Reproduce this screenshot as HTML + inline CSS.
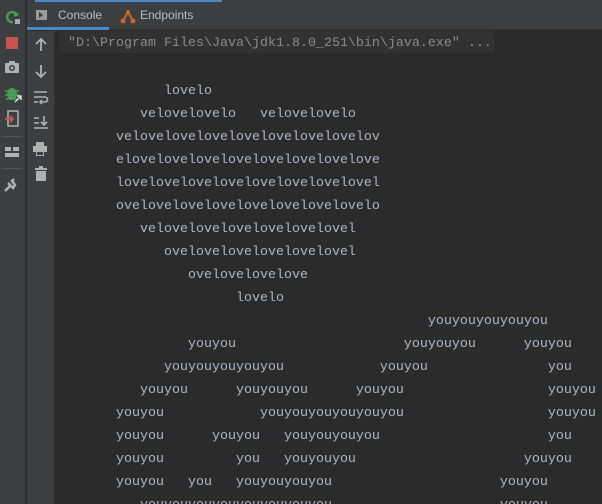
<!DOCTYPE html>
<html><head><meta charset="utf-8"><style>
*{margin:0;padding:0;box-sizing:border-box}
html,body{width:602px;height:504px;overflow:hidden}
body{background:#2b2b2b;position:relative;font-family:"Liberation Sans",sans-serif}
.lt{position:absolute;left:0;top:0;width:26px;height:504px;background:#3c3f41;border-right:1px solid #323232}
.tb{position:absolute;left:27px;top:0;width:575px;height:30px;background:#3c3f41;border-bottom:1px solid #323232}
.topblue{position:absolute;left:35px;top:0;width:187px;height:2px;background:#4a88c7}
.t2{position:absolute;left:27px;top:31px;width:28px;height:473px;background:#3c3f41;border-right:1px solid #323232}
.tab{position:absolute;top:8px;font-size:12px;color:#bbbbbb}
.ul{position:absolute;left:27px;top:27px;width:82px;height:3px;background:#4a88c7}
pre{position:absolute;left:68px;top:80px;font-family:"Liberation Mono",monospace;font-size:13.33px;line-height:23px;color:#a9b7c6}
.q{position:absolute;left:59px;top:31px;width:435px;height:22px;background:#323232;font-family:"Liberation Mono",monospace;font-size:13.33px;color:#8a8a8a;padding:5px 0 0 9px;line-height:16px}
.ic{position:absolute}
</style></head><body>
<div class="lt"></div>
<div class="tb"></div>
<div class="topblue"></div>
<div class="ul"></div>
<div class="t2"></div>
<div class="ic" style="left:36px;top:10px;width:11px;height:10px;background:#9a9a9a"></div>
<div class="ic" style="left:39px;top:12px;width:0;height:0;border-left:4px solid #3c3f41;border-top:3px solid transparent;border-bottom:3px solid transparent"></div>
<div class="tab" style="left:58px">Console</div>
<svg class="ic" style="left:120px;top:8px" width="16" height="16"><path d="M3 13 L8 4 L13 13" stroke="#c9652d" stroke-width="2" fill="none"/><circle cx="3" cy="13" r="2.5" fill="#c9652d"/><circle cx="13" cy="13" r="2.5" fill="#c9652d"/><circle cx="8" cy="4" r="2" fill="#c9652d"/></svg>
<div class="tab" style="left:140px">Endpoints</div>
<svg class="ic" style="left:4px;top:8px" width="18" height="18"><path d="M13 8 A5 5 0 1 0 9 14" stroke="#499c54" stroke-width="2.5" fill="none"/><path d="M10 3 L15 6 L10 9Z" fill="#499c54"/><rect x="11" y="11" width="5" height="5" fill="#aaa"/></svg>
<div class="ic" style="left:6px;top:37px;width:12px;height:12px;background:#c75450"></div>
<svg class="ic" style="left:4px;top:60px" width="16" height="14"><rect x="1" y="3" width="14" height="10" fill="#afb1b3"/><rect x="5" y="1" width="6" height="3" fill="#afb1b3"/><circle cx="8" cy="8" r="3" fill="#3c3f41"/><circle cx="8" cy="8" r="1.5" fill="#afb1b3"/></svg>
<svg class="ic" style="left:4px;top:85px" width="18" height="18"><ellipse cx="8" cy="9" rx="5" ry="6" fill="#499c54"/><path d="M1 6h14M1 10h14M2 14h12" stroke="#499c54" stroke-width="1.5"/><path d="M11 17 L17 11 M13 11h4v4" stroke="#ddd" stroke-width="1.5" fill="none"/></svg>
<svg class="ic" style="left:4px;top:110px" width="16" height="18"><rect x="4" y="1" width="10" height="15" stroke="#afb1b3" stroke-width="1.5" fill="none"/><path d="M1 9h8 M6 6l3 3-3 3" stroke="#c75450" stroke-width="2" fill="none"/></svg>
<div class="ic" style="left:2px;top:136px;width:20px;height:1px;background:#555"></div>
<svg class="ic" style="left:4px;top:145px" width="16" height="14"><rect x="1" y="2" width="6" height="4" fill="#afb1b3"/><rect x="9" y="2" width="6" height="4" fill="#afb1b3"/><rect x="1" y="8" width="14" height="4" fill="#afb1b3"/></svg>
<div class="ic" style="left:2px;top:168px;width:20px;height:1px;background:#555"></div>
<svg class="ic" style="left:3px;top:177px" width="16" height="16"><path d="M2 14 L7 9 M5 6 L10 11 L12 8 L9 4 L11 2 M9 4 L12 8" stroke="#afb1b3" stroke-width="2.5" fill="none"/></svg>
<svg class="ic" style="left:33px;top:37px" width="16" height="16"><path d="M8 14V2 M3 7l5-5 5 5" stroke="#afb1b3" stroke-width="1.8" fill="none"/></svg>
<svg class="ic" style="left:33px;top:63px" width="16" height="16"><path d="M8 2v12 M3 9l5 5 5-5" stroke="#afb1b3" stroke-width="1.8" fill="none"/></svg>
<svg class="ic" style="left:33px;top:89px" width="16" height="16"><path d="M1 3h13 M1 8h11a2.5 2.5 0 0 1 0 5h-4 M9 11l-2 2 2 2 M1 13h4" stroke="#afb1b3" stroke-width="1.6" fill="none"/></svg>
<svg class="ic" style="left:33px;top:114px" width="16" height="16"><path d="M1 4h5 M1 9h5 M1 14h14 M11 2v9 M8 8l3 3 3-3" stroke="#afb1b3" stroke-width="1.6" fill="none"/></svg>
<svg class="ic" style="left:32px;top:141px" width="16" height="16"><rect x="4" y="1" width="8" height="4" fill="#afb1b3"/><rect x="1" y="5" width="14" height="6" fill="#afb1b3"/><rect x="4" y="10" width="8" height="5" fill="#afb1b3"/><rect x="5" y="11" width="6" height="3" fill="#3c3f41"/></svg>
<svg class="ic" style="left:33px;top:166px" width="16" height="16"><rect x="2" y="2" width="12" height="2" fill="#afb1b3"/><rect x="6" y="0" width="4" height="2" fill="#afb1b3"/><rect x="3" y="5" width="10" height="10" fill="#afb1b3"/></svg>
<div class="q">"D:\Program Files\Java\jdk1.8.0_251\bin\java.exe" ...</div>
<pre>            lovelo
         velovelovelo   velovelovelo
      velovelovelovelovelovelovelovelov
      elovelovelovelovelovelovelovelove
      lovelovelovelovelovelovelovelovel
      ovelovelovelovelovelovelovelovelo
         velovelovelovelovelovelovel
            ovelovelovelovelovelovel
               ovelovelovelove
                     lovelo
                                             youyouyouyouyou
               youyou                     youyouyou      youyou
            youyouyouyouyou            youyou               you
         youyou      youyouyou      youyou                  youyou
      youyou            youyouyouyouyouyou                  youyou
      youyou      youyou   youyouyouyou                     you
      youyou         you   youyouyou                     youyou
      youyou   you   youyouyouyou                     youyou
         youyouyouyouyouyouyouyou                     youyou</pre>
</body></html>
